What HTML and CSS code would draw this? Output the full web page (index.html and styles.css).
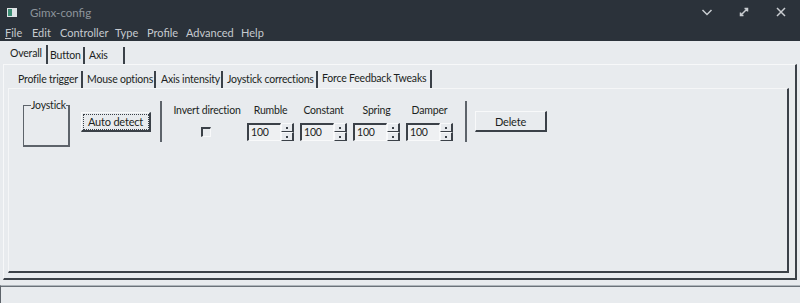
FILE: index.html
```html
<!DOCTYPE html>
<html>
<head>
    <title>Gimx-config</title>
    <link rel="stylesheet" href="styles.css">
</head>
<body>
    <div class="titlebar">
        <div class="app-icon"><span></span></div>
        <span class="title">Gimx-config</span>
        <div class="controls">
            <svg width="14" height="14" viewBox="0 0 14 14"><path d="M2.5 5 L7 9.5 L11.5 5" fill="none" stroke="#c9cdd1" stroke-width="1.5"/></svg>
            <svg width="14" height="14" viewBox="0 0 14 14"><path d="M4 10 L10 4 M7.5 3.5 H10.5 V6.5 M3.5 7.5 V10.5 H6.5" fill="none" stroke="#c9cdd1" stroke-width="1.5"/></svg>
            <svg width="14" height="14" viewBox="0 0 14 14"><path d="M3 3 L11 11 M11 3 L3 11" fill="none" stroke="#c9cdd1" stroke-width="1.5"/></svg>
        </div>
    </div>
    <div class="menubar">
        <span class="m-file"><u>F</u>ile</span>
        <span class="m-edit">Edit</span>
        <span class="m-controller">Controller</span>
        <span class="m-type">Type</span>
        <span class="m-profile">Profile</span>
        <span class="m-advanced">Advanced</span>
        <span>Help</span>
    </div>

    <div class="main">
        <div class="tabs outer-tabs">
            <div class="tab active t-overall">Overall</div>
            <div class="tab t-button">Button</div>
            <div class="tab t-axis">Axis</div>
        </div>
        <div class="notebook">
            <div class="tabs inner-tabs">
                <div class="tab t-trigger">Profile trigger</div>
                <div class="tab t-mouse">Mouse options</div>
                <div class="tab t-intensity">Axis intensity</div>
                <div class="tab t-corrections">Joystick corrections</div>
                <div class="tab active t-ffb">Force Feedback Tweaks</div>
            </div>
            <div class="page">
                <div class="row">
                    <fieldset class="group">
                        <legend>Joystick</legend>
                    </fieldset>
                    <button class="btn focus">Auto detect</button>
                    <div class="vsep"></div>
                    <div class="field invert">
                        <label>Invert direction</label>
                        <div class="check"></div>
                    </div>
                    <script>
                        const effects = ["Rumble", "Constant", "Spring", "Damper"];
                        document.write(effects.map(name => `
                            <div class="field">
                                <label>${name}</label>
                                <div class="spin">
                                    <div class="spin-text">100</div>
                                    <div class="spin-btns">
                                        <div class="arrow"><i></i></div>
                                        <div class="arrow"><i></i></div>
                                    </div>
                                </div>
                            </div>
                        `).join(''));
                    </script>
                    <div class="vsep second"></div>
                    <button class="btn delete">Delete</button>
                </div>
            </div>
        </div>
    </div>

    <div class="statusbar"></div>
</body>
</html>
```

FILE: styles.css
```css
* {
    box-sizing: border-box;
}
body {
    margin: 0;
    width: 800px;
    height: 303px;
    overflow: hidden;
    background-color: #e8ebee;
    font-family: Lato, "Noto Sans", sans-serif;
    font-size: 10.5px;
    letter-spacing: -0.2px;
    color: #1c1f22;
}
.titlebar {
    height: 24px;
    background: #2b323a;
    display: flex;
    align-items: center;
    color: #8d949b;
    font-size: 11.5px;
    letter-spacing: 0;
}
.app-icon {
    width: 10px;
    height: 9px;
    margin-left: 7px;
    margin-right: 13px;
    background: #dfe3e6;
    padding: 1px;
}
.app-icon span {
    display: block;
    width: 4px;
    height: 7px;
    background: #3c8d74;
}
.controls {
    margin-left: auto;
    display: flex;
    gap: 23px;
    margin-right: 12px;
}
.menubar {
    height: 17px;
    background: #2b323a;
    display: flex;
    align-items: flex-start;
    color: #c6cacf;
    padding: 2px 0 0 5px;
    line-height: 14px;
    font-size: 11px;
    letter-spacing: 0;
}
.m-file { width: 27px; }
.m-edit { width: 28px; }
.m-controller { width: 55px; }
.m-type { width: 32px; }
.m-profile { width: 39px; }
.m-advanced { width: 55px; }
.main {
    padding-top: 4px;
    padding-left: 3px;
}
.tabs {
    display: flex;
    height: 19px;
}
.tab {
    padding-left: 4px;
    border-right: 2px solid #3b4148;
    line-height: 17px;
    margin-top: 2px;
    height: 17px;
    white-space: nowrap;
}
.outer-tabs .tab.active {
    margin-top: 0;
    height: 19px;
}
.t-overall { width: 45px; padding-left: 7px !important; }
.t-button { width: 37px; padding-left: 2px !important; }
.t-axis { width: 40px; }
.notebook {
    width: 794px;
    height: 216px;
    border-top: 1px solid #f7f8f9;
    border-left: 1px solid #f7f8f9;
    border-right: 2px solid #3b4148;
    border-bottom: 2px solid #3b4148;
    padding: 5px 0 0 4px;
}
.inner-tabs {
    padding-left: 7px;
    height: 18px;
}
.inner-tabs .tab {
    margin-top: 1px;
}
.inner-tabs .tab.active {
    margin-top: 0;
    height: 18px;
    background: #eceef1;
}
.t-trigger { width: 68px; padding-left: 3px !important; }
.t-mouse { width: 73px; }
.t-intensity { width: 67px; padding-left: 5px !important; }
.t-corrections { width: 95px; }
.t-ffb { width: 114px; }
.page {
    width: 781px;
    height: 185px;
    border-top: 1px solid #f5f6f7;
    border-left: 1px solid #f5f6f7;
    border-right: 2px solid #3b4148;
    border-bottom: 2px solid #3b4148;
}
.row {
    display: flex;
    align-items: flex-start;
    padding: 11px 0 0 14px;
}
.group {
    margin: 0;
    width: 47px;
    height: 47px;
    padding: 0;
    border: 1px solid #5d636a;
    border-right-width: 2px;
    border-bottom-width: 2px;
}
.group legend {
    padding: 0;
    margin-left: 7px;
    line-height: 10px;
}
.btn {
    font-family: inherit;
    font-size: 11px;
    letter-spacing: -0.2px;
    color: #1c1f22;
    background: #e8ebee;
    border: 1px solid #f8f9fa;
    border-right: 2px solid #3b4148;
    border-bottom: 2px solid #3b4148;
    padding: 0;
    height: 20px;
}
.btn.focus {
    width: 70px;
    margin: 12px 0 0 11px;
    outline: 1px dotted #3b4148;
    outline-offset: -3px;
}
.btn.delete {
    width: 72px;
    margin: 11px 0 0 8px;
    height: 21px;
}
.vsep {
    width: 2px;
    height: 41px;
    background: #5d636a;
    margin: 1px 0 0 9px;
}
.vsep.second {
    margin-left: 12px;
}
.field {
    display: flex;
    flex-direction: column;
    align-items: center;
    width: 47px;
    margin-left: 6px;
}
.field label {
    line-height: 14px;
    margin-top: 3px;
    height: 14px;
    white-space: nowrap;
}
.field.invert {
    width: 66px;
    margin-left: 12px;
    margin-right: 1px;
}
.check {
    width: 10px;
    height: 10px;
    margin-top: 10px;
    margin-right: 3px;
    border-top: 2px solid #3b4148;
    border-left: 2px solid #3b4148;
    border-right: 1px solid #f8f9fa;
    border-bottom: 1px solid #f8f9fa;
}
.spin {
    display: flex;
    margin-top: 6px;
    height: 18px;
}
.spin-text {
    width: 34px;
    border-top: 2px solid #3b4148;
    border-left: 2px solid #3b4148;
    border-right: 1px solid #f8f9fa;
    border-bottom: 1px solid #f8f9fa;
    padding-left: 2px;
    line-height: 15px;
    background: #eef0f2;
}
.spin-btns {
    width: 13px;
    display: flex;
    flex-direction: column;
}
.arrow {
    height: 9px;
    border-top: 1px solid #f8f9fa;
    border-left: 1px solid #f8f9fa;
    border-right: 2px solid #3b4148;
    border-bottom: 1px solid #3b4148;
    display: flex;
    align-items: center;
    justify-content: center;
}
.arrow i {
    width: 2px;
    height: 2px;
    background: #3b4148;
}
.statusbar {
    margin-top: 5px;
    height: 20px;
    border-top: 1px solid #aeb5bb;
    border-left: 1px solid #5d636a;
    box-shadow: inset 0 1px 0 #6b7279;
}
```
